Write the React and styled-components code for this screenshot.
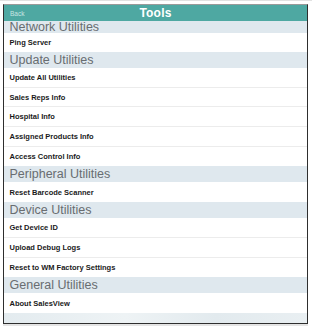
import styled, { createGlobalStyle } from 'styled-components';

const GlobalStyle = createGlobalStyle`
  html, body {
    margin: 0;
    padding: 0;
    background: #ffffff;
  }
  * { box-sizing: border-box; }
`;

const Page = styled.div`
  width: 312px;
  height: 327px;
  padding: 3px 4px 0 3px;
  border-top: 1px solid #e2e2e2;
  background: #ffffff;
  font-family: 'Liberation Sans', Arial, sans-serif;
`;

const Frame = styled.div`
  height: 320px;
  border: 1.5px solid #2e2e2e;
  border-top-color: #9a9a9a;
  display: flex;
  flex-direction: column;
  overflow: hidden;
  background: #ffffff;
  box-shadow: 0 2px 0 #e4e4e4;
`;

const Header = styled.div`
  height: 16px;
  flex-shrink: 0;
  background: #4ea8a2;
  display: grid;
  grid-template-columns: 1fr auto 1fr;
  align-items: center;
  padding: 0 6px;
`;

const BackLink = styled.span`
  font-size: 6.5px;
  color: #c9e6e3;
  justify-self: start;
`;

const Title = styled.span`
  font-size: 12px;
  font-weight: 700;
  color: #ffffff;
  letter-spacing: 0.2px;
`;

const List = styled.div`
  flex: 1;
  display: flex;
  flex-direction: column;
`;

const SectionHeader = styled.div`
  height: ${p => (p.$first ? '12px' : '16px')};
  background: #dfe8ee;
  color: #686d71;
  font-size: 12.5px;
  padding-left: 5.5px;
  display: flex;
  align-items: ${p => (p.$first ? 'flex-end' : 'center')};
  line-height: 1;
  overflow: hidden;
`;

const Row = styled.div`
  height: ${p => p.$h || 19.5}px;
  background: #ffffff;
  border-bottom: 1px solid #ececec;
  display: flex;
  align-items: center;
  padding-left: 5.5px;
  font-size: 7.5px;
  font-weight: 700;
  color: #1a1a1a;
  &:last-child { border-bottom: none; }
`;

const Footer = styled.div`
  flex: 1;
  background: linear-gradient(90deg, #e3ebef 0%, #eef3f5 40%, #e2eaee 70%, #e9eff2 100%);
`;

const sections = [
  { title: 'Network Utilities', first: true, items: ['Ping Server'] },
  {
    title: 'Update Utilities',
    items: ['Update All Utilities', 'Sales Reps Info', 'Hospital Info', 'Assigned Products Info', 'Access Control Info']
  },
  { title: 'Peripheral Utilities', items: ['Reset Barcode Scanner'] },
  { title: 'Device Utilities', items: ['Get Device ID', 'Upload Debug Logs', 'Reset to WM Factory Settings'] },
  { title: 'General Utilities', items: ['About SalesView'] }
];

function App() {
  return (
    <>
      <GlobalStyle />
      <Page>
        <Frame>
          <Header>
            <BackLink>Back</BackLink>
            <Title>Tools</Title>
            <span />
          </Header>
          <List>
            {sections.map(s => (
              <div key={s.title}>
                <SectionHeader $first={s.first}>{s.title}</SectionHeader>
                {s.items.map(item => (
                  <Row key={item} $h={s.first ? 19 : 19.7}>{item}</Row>
                ))}
              </div>
            ))}
            <Footer />
          </List>
        </Frame>
      </Page>
    </>
  );
}

export default App;
